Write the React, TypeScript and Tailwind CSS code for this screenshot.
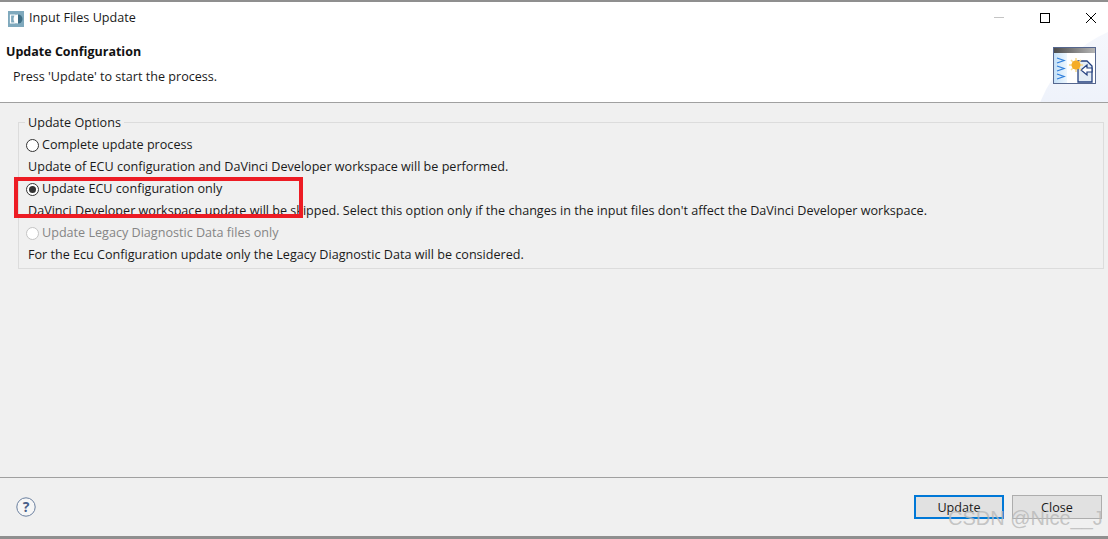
import React from 'react';

const font = { fontFamily: '"Open Sans", sans-serif' };

const Radio: React.FC<{ checked?: boolean; disabled?: boolean }> = ({ checked, disabled }) => (
  <span
    className={`flex h-[13px] w-[13px] shrink-0 items-center justify-center rounded-full border bg-white ${
      disabled ? 'border-[#c4c4c4]' : 'border-[#333333]'
    }`}
  >
    {checked && <span className="h-[7px] w-[7px] rounded-full bg-[#333333]" />}
  </span>
);

const Option: React.FC<{ label: string; note: string; checked?: boolean; disabled?: boolean }> = ({ label, note, checked, disabled }) => (
  <div>
    <div className="flex h-[22px] items-center gap-[3px] pl-[7px]">
      <Radio checked={checked} disabled={disabled} />
      <span className={disabled ? 'text-[#858585]' : 'text-[#1a1a1a]'}>{label}</span>
    </div>
    <div className="flex h-[22px] items-center whitespace-nowrap pl-[9px] text-[#1a1a1a]">{note}</div>
  </div>
);

const AppIcon = () => (
  <svg width="16" height="16" viewBox="0 0 16 16">
    <rect width="16" height="16" fill="#7fa9bd" />
    <path d="M2.5 4h4.5v8H2.5z" fill="none" stroke="#ffffff" strokeWidth="1.2" />
    <path d="M10 3.5a4.5 4.5 0 0 1 0 9z" fill="#3f6f86" />
    <path d="M10 3.5a4.5 4.5 0 0 0 0 9z" fill="#ffffff" />
  </svg>
);

const WizardIcon = () => (
  <svg width="46" height="40" viewBox="0 0 46 40">
    <defs>
      <linearGradient id="bar" x1="0" x2="1" y1="0" y2="0">
        <stop offset="0" stopColor="#4d4d4d" />
        <stop offset="1" stopColor="#b5b5b5" />
      </linearGradient>
      <linearGradient id="side" x1="0" x2="1" y1="0" y2="0">
        <stop offset="0" stopColor="#c4e0f7" />
        <stop offset="1" stopColor="#eef7fe" />
      </linearGradient>
    </defs>
    <rect x="1.5" y="1.5" width="42" height="36" fill="#ffffff" stroke="#56678f" />
    <rect x="2" y="2" width="41" height="5" fill="url(#bar)" />
    <rect x="2" y="7" width="13" height="30" fill="url(#side)" />
    <path d="M5 12l7 2.5-7 2.5M5 20l7 2.5-7 2.5M5 28l7 2.5-7 2.5" fill="none" stroke="#2f7fdc" strokeWidth="1.3" />
    <path d="M26 15h9l5 5v16H26z" fill="#e4edf5" stroke="#24407f" strokeWidth="1.3" />
    <path d="M35 19l-6 5 6 5v-3h5v-4h-5z" fill="#ffffff" stroke="#24407f" strokeWidth="1.2" />
    <path d="M24 12v14M17 19h14M19 14l10 10M29 14l-10 10" stroke="#f8d98c" strokeWidth="1.5" />
    <circle cx="24" cy="19" r="4.5" fill="#f5ac25" />
  </svg>
);

export default function App() {
  return (
    <div className="relative flex h-[539px] w-[1108px] flex-col overflow-hidden bg-[#f0f0f0] text-[12.6px]" style={font}>
      <div className="h-[2px] bg-[#8f8f8f]" />
      <div className="relative h-[101px] shrink-0 overflow-hidden border-b border-[#a0a0a0] bg-white">
        <div className="absolute left-[1031px] top-[19px] h-[258px] w-[258px] rounded-full bg-linear-to-b from-[#f6f8fd] to-[#dfe7f6]" />
        <div className="relative flex h-[33px] items-center pl-[8px]">
          <AppIcon />
          <span className="ml-[5px] text-[#1a1a1a]">Input Files Update</span>
          <div className="mb-[2px] ml-auto flex items-center">
            <span className="h-px w-[10px] bg-[#c4c4c4]" />
            <span className="ml-[36px] h-[10px] w-[10px] border border-black" />
            <svg className="ml-[35px] mr-[11px]" width="12" height="12" viewBox="0 0 12 12">
              <path d="M1 1l10 10M11 1L1 11" stroke="#000000" strokeWidth="1" />
            </svg>
          </div>
        </div>
        <div className="relative flex items-start justify-between pl-[6px] pr-[10px]">
          <div>
            <div className="mt-[8px] text-[12.5px] font-bold leading-[17px] text-[#111111]">Update Configuration</div>
            <div className="mt-[8px] pl-[7px] leading-[17px] text-[#1a1a1a]">Press 'Update' to start the process.</div>
          </div>
          <div className="mt-[11px]">
            <WizardIcon />
          </div>
        </div>
      </div>

      <div className="flex-1 pl-[18px] pr-[4px] pt-[11px]">
        <fieldset className="h-[155px] border border-[#dcdcdc] pt-[4px]">
          <legend className="ml-[6px] translate-y-px px-[3px] leading-[16px] text-[#1a1a1a]">Update Options</legend>
          <Option label="Complete update process" note="Update of ECU configuration and DaVinci Developer workspace will be performed." />
          <Option
            checked
            label="Update ECU configuration only"
            note="DaVinci Developer workspace update will be skipped. Select this option only if the changes in the input files don't affect the DaVinci Developer workspace."
          />
          <Option
            disabled
            label="Update Legacy Diagnostic Data files only"
            note="For the Ecu Configuration update only the Legacy Diagnostic Data will be considered."
          />
        </fieldset>
      </div>

      <div className="flex h-[59px] shrink-0 items-center border-t border-[#a0a0a0] pl-[16px] pr-[6px]">
        <svg width="20" height="20" viewBox="0 0 20 20">
          <circle cx="10" cy="10" r="9.2" fill="#f6f6f6" stroke="#6a7f9f" />
          <text x="10" y="15" textAnchor="middle" fontSize="14" fontWeight="700" fill="#4a6088">?</text>
        </svg>
        <button className="ml-auto h-[24px] w-[90px] border-2 border-[#0078d7] bg-[#e1e1e1] pt-[2px] text-[#1a1a1a]">Update</button>
        <button className="ml-[8px] h-[24px] w-[90px] border border-[#adadad] bg-[#e1e1e1] pt-[2px] text-[#1a1a1a]">Close</button>
      </div>
      <div className="h-[3px] bg-[#8f8f8f]" />
      <div className="pointer-events-none absolute left-[14px] top-[177px] h-[41px] w-[289px] border-[4px] border-[#ed1c24]" />
      <div className="pointer-events-none absolute left-[948px] top-[507px] font-['Liberation_Sans'] text-[20px] leading-[23px] text-[#b8b8b8]/80">CSDN @Nice__J</div>
    </div>
  );
}
